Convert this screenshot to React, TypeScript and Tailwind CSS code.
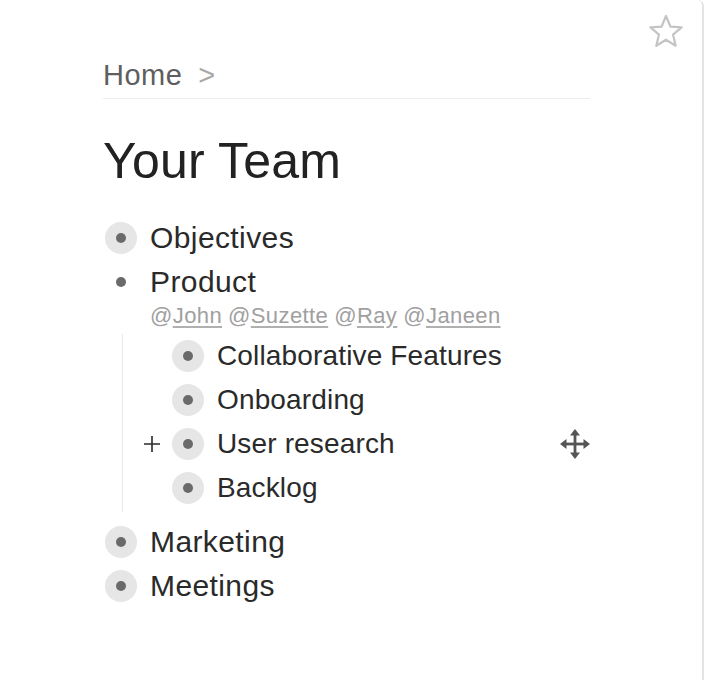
import React from "react";

const font = { fontFamily: '"Liberation Sans", Arial, Helvetica, sans-serif' };

function Halo({ halo = true }: { halo?: boolean }) {
  return (
    <div
      className={`flex h-[32px] w-[32px] shrink-0 items-center justify-center rounded-full ${
        halo ? "bg-[#e6e6e6]" : ""
      }`}
    >
      <div className="h-[10px] w-[10px] rounded-full bg-[#6a6a6a]" />
    </div>
  );
}

function TopRow({ label, halo = true }: { label: string; halo?: boolean }) {
  return (
    <div className="flex h-[44px] items-center">
      <div className="ml-[2px]">
        <Halo halo={halo} />
      </div>
      <span className="ml-[13px] text-[30px] leading-[34px] tracking-[0.4px] text-[#2a2a2a]">{label}</span>
    </div>
  );
}

function MoveIcon() {
  return (
    <svg width="32" height="32" viewBox="0 0 32 32" fill="#555">
      <rect x="14.6" y="6" width="2.8" height="20" />
      <rect x="6" y="14.6" width="20" height="2.8" />
      <polygon points="16,1 21,7.5 11,7.5" />
      <polygon points="16,31 21,24.5 11,24.5" />
      <polygon points="1,16 7.5,11 7.5,21" />
      <polygon points="31,16 24.5,11 24.5,21" />
    </svg>
  );
}

function NestedRow({ label, plus = false, move = false }: { label: string; plus?: boolean; move?: boolean }) {
  return (
    <div className="flex h-[44px] items-center pl-[20px]">
      <div className="flex w-[18px] shrink-0 items-center justify-center">
        {plus && (
          <svg width="18" height="18" viewBox="0 0 18 18">
            <path d="M9 1v16M1 9h16" stroke="#2a2a2a" strokeWidth="1.6" />
          </svg>
        )}
      </div>
      <div className="ml-[11px]">
        <Halo />
      </div>
      <span className="ml-[13px] text-[28px] leading-[32px] tracking-[0.15px] text-[#2a2a2a]">{label}</span>
      {move && (
        <div className="ml-auto mr-[-1px]">
          <MoveIcon />
        </div>
      )}
    </div>
  );
}

function Mention({ name }: { name: string }) {
  return (
    <span className="text-[#a0a0a0]">
      @<span className="underline decoration-[#b0b0b0] underline-offset-[3px]">{name}</span>
    </span>
  );
}

export default function App() {
  return (
    <div
      className="flex h-[680px] w-[704px] rounded-tr-[6px] border-r-[2px] border-[#e4e4e4] bg-white pl-[103px]"
      style={font}
    >
      <div className="flex w-[487px] flex-col">
        <div className="border-b border-[#ececec] pb-[7px] pt-[59px] text-[29px] leading-[32px] tracking-[0.5px]">
          <span className="text-[#5e5e5e]">Home</span>
          <span className="ml-[16px] text-[#a8a8a8]">&gt;</span>
        </div>
        <h1 className="mt-[33px] text-[50px] leading-[58px] tracking-[0.2px] text-[#222]">Your Team</h1>
        <div className="mt-[26px] flex flex-col">
          <TopRow label="Objectives" />
          <TopRow label="Product" halo={false} />
          <div className="flex h-[30px] gap-[6px] pl-[47px] text-[22px] leading-[24px] tracking-[0.4px]">
            <Mention name="John" />
            <Mention name="Suzette" />
            <Mention name="Ray" />
            <Mention name="Janeen" />
          </div>
          <div className="ml-[19px] flex flex-col border-l border-[#e8e8e8] pb-[2px]">
            <NestedRow label="Collaborative Features" />
            <NestedRow label="Onboarding" />
            <NestedRow label="User research" plus move />
            <NestedRow label="Backlog" />
          </div>
          <div className="mt-[8px] flex flex-col">
            <TopRow label="Marketing" />
            <TopRow label="Meetings" />
          </div>
        </div>
      </div>
      <div className="ml-[58px] mt-[14px]">
        <svg width="36" height="36" viewBox="0 0 36 36" fill="none">
          <polygon
            points="18,2 22.4,12.6 33.6,13.3 25,20.6 27.7,31.8 18,25.7 8.3,31.8 11,20.6 2.4,13.3 13.6,12.6"
            stroke="#c4c4c4"
            strokeWidth="2.2"
            strokeLinejoin="round"
          />
        </svg>
      </div>
    </div>
  );
}
